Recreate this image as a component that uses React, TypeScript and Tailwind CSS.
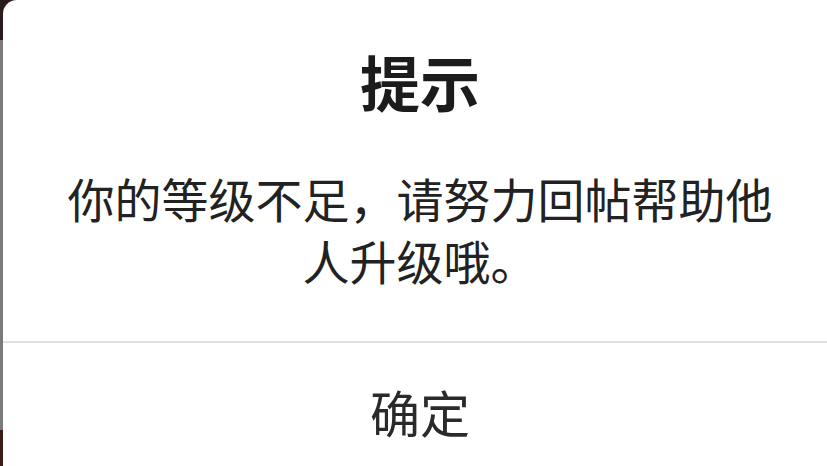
export default function App() {
  return (
    <div
      className="flex w-[827px] h-[466px] overflow-hidden bg-[#2a1c1c]"
      style={{ fontFamily: '"Noto Sans CJK SC", "Noto Sans", sans-serif' }}
    >
      <div className="flex flex-col w-[3px] shrink-0">
        <div className="h-[40px] bg-[#2a1c1c]" />
        <div className="flex-1 bg-[#7a7a7a]" />
        <div className="h-[36px] bg-[#3b1a18]" />
      </div>
      <div className="flex flex-col w-[834px] shrink-0 bg-white rounded-tl-[14px]">
        <div className="pt-[51px] text-center text-[60px] leading-[60px] font-bold text-[#1c1c1c]">
          提示
        </div>
        <div className="mt-[56px] px-[50px] text-center text-[47px] leading-[62px] text-[#222222]">
          你的等级不足，请努力回帖帮助他人升级哦。
        </div>
        <div className="mt-[50px] h-[2px] shrink-0 bg-[#e0e0e0]" />
        <div className="h-[138px] text-center text-[50px] leading-[136px] text-[#2a2a2a]">
          确定
        </div>
      </div>
    </div>
  );
}
